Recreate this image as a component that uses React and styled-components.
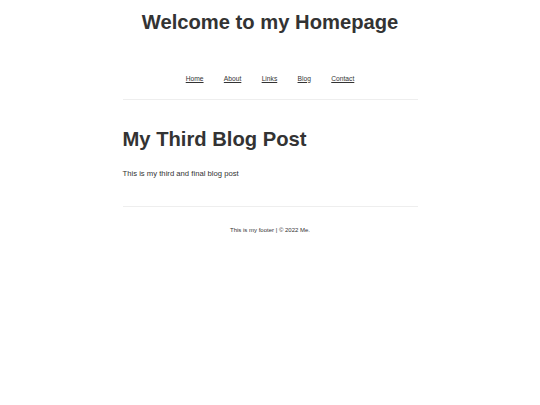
import React from "react";
import styled, { createGlobalStyle } from "styled-components";

const Global = createGlobalStyle`
  html, body { margin: 0; padding: 0; background: #fff; }
  body { font-family: "Liberation Sans", Arial, sans-serif; color: #333; }
`;

const Page = styled.div`
  width: 295px;
  margin: 0 auto;
  display: flex;
  flex-direction: column;
`;

const Header = styled.header`
  display: flex;
  flex-direction: column;
  align-items: center;
`;

const SiteTitle = styled.h1`
  margin: 9px 0 0;
  font-size: 20.2px;
  line-height: 26px;
  font-weight: bold;
  white-space: nowrap;
  color: #333;
`;

const Nav = styled.nav`
  display: flex;
  justify-content: center;
  gap: 20.3px;
  margin-top: 38.5px;
  padding-bottom: 16.5px;
  border-bottom: 1px solid #eee;
  width: 100%;
`;

const NavLink = styled.a`
  font-size: 6.7px;
  line-height: 9px;
  color: #333;
  text-decoration: underline;
`;

const Main = styled.main`
  padding: 26px 0 27px;
  border-bottom: 1px solid #eee;
`;

const PostTitle = styled.h2`
  margin: 0;
  font-size: 20.2px;
  line-height: 26px;
  font-weight: bold;
  color: #333;
`;

const Para = styled.p`
  margin: 17px 0 0;
  font-size: 7.7px;
  line-height: 10px;
  color: #333;
`;

const Footer = styled.footer`
  text-align: center;
  font-size: 6px;
  line-height: 8px;
  padding-top: 19px;
  color: #333;
`;

export default function App() {
  return (
    <>
      <Global />
      <Page>
        <Header>
          <SiteTitle>Welcome to my Homepage</SiteTitle>
          <Nav>
            <NavLink href="#">Home</NavLink>
            <NavLink href="#">About</NavLink>
            <NavLink href="#">Links</NavLink>
            <NavLink href="#">Blog</NavLink>
            <NavLink href="#">Contact</NavLink>
          </Nav>
        </Header>
        <Main>
          <PostTitle>My Third Blog Post</PostTitle>
          <Para>This is my third and final blog post</Para>
        </Main>
        <Footer>This is my footer | © 2022 Me.</Footer>
      </Page>
    </>
  );
}
